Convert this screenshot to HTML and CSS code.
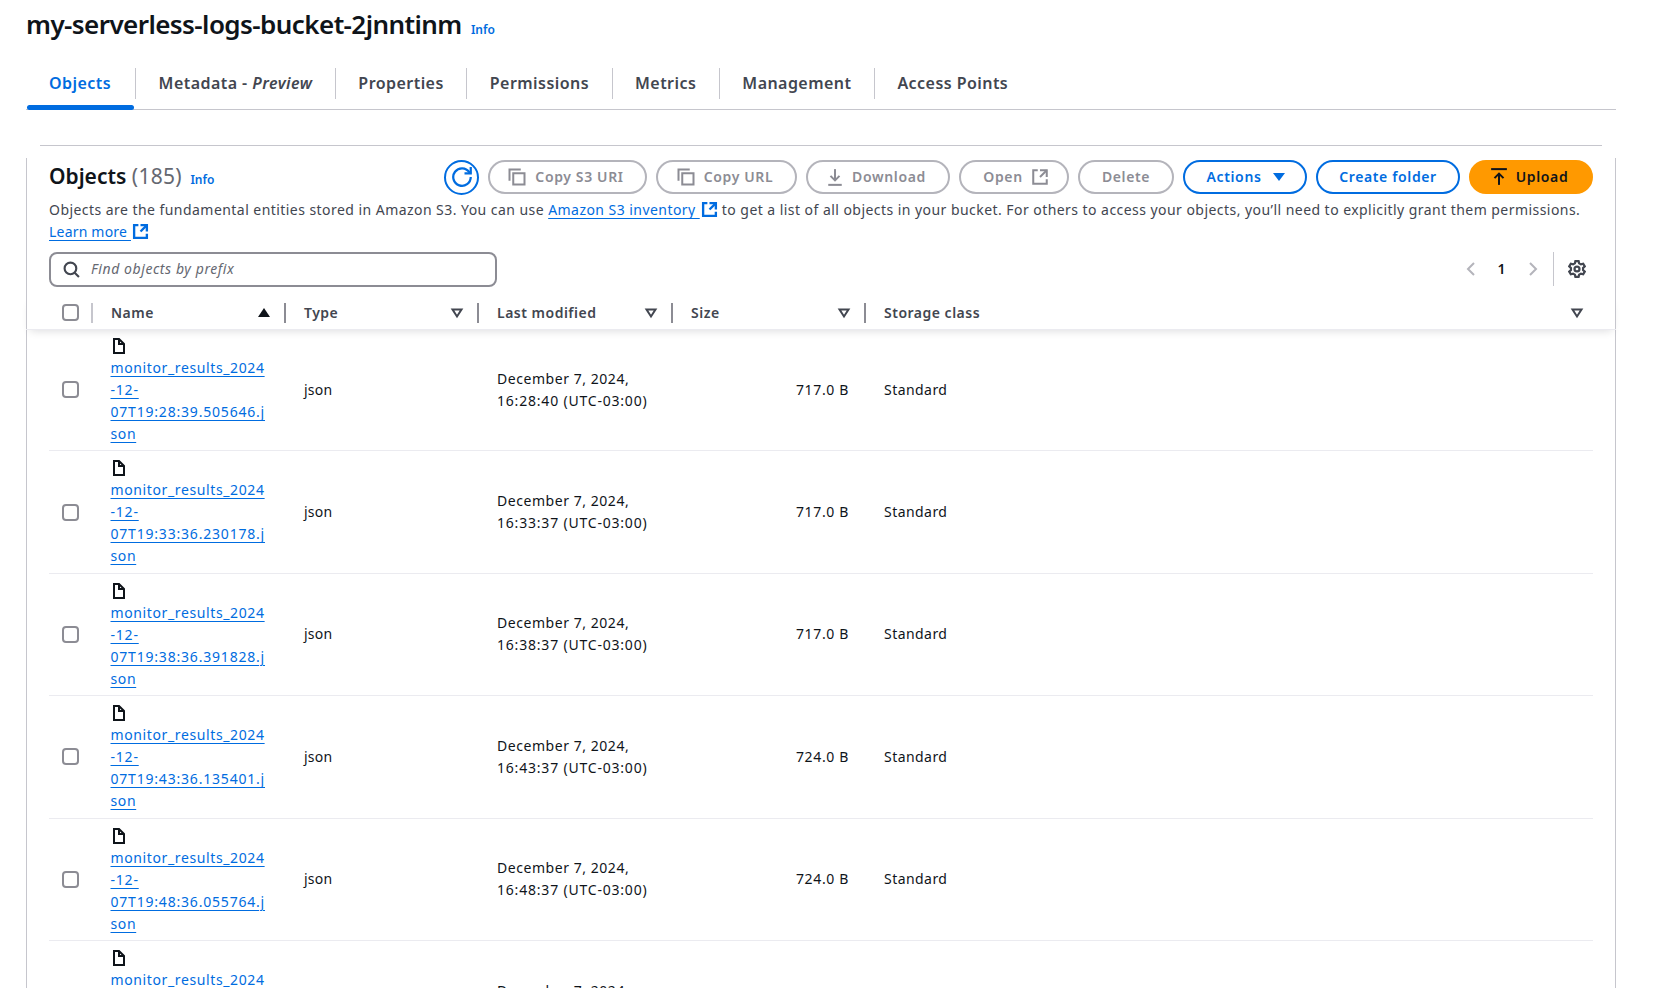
FILE: index.html
```html
<!DOCTYPE html>
<html lang="en">
<head>
<meta charset="utf-8">
<title>my-serverless-logs-bucket-2jnntinm</title>
<link rel="stylesheet" href="styles.css">
</head>
<body>
<svg class="sprite" aria-hidden="true">
  <symbol id="i-copy" viewBox="0 0 16 16"><path d="M5 5h9v9H5z"/><path d="M2 11V2h9"/></symbol>
  <symbol id="i-download" viewBox="0 0 16 16"><path d="M8 1v10"/><path d="M4 7l4 4 4-4"/><path d="M2 15h12"/></symbol>
  <symbol id="i-upload" viewBox="0 0 16 16"><path d="M8 15V5"/><path d="M12 9 8 5 4 9"/><path d="M1 1h14"/></symbol>
  <symbol id="i-ext" viewBox="0 0 16 16"><path d="M14 8V2H8"/><path d="M14 2 8 8"/><path d="M6 2H2v12h12v-4"/></symbol>
  <symbol id="i-refresh" viewBox="0 0 16 16"><path d="M10 5h5V0"/><path d="M15 8a7 7 0 1 1-1.2-3.9L15 5"/></symbol>
  <symbol id="i-search" viewBox="0 0 16 16"><circle cx="7" cy="7" r="5.5"/><path d="M11 11l4 4"/></symbol>
  <symbol id="i-file" viewBox="0 0 16 16"><path d="M8 1v5h5"/><path d="M13 15H3V1h5l5 5z"/></symbol>
  <symbol id="i-gear" viewBox="0 0 16 16"><path d="M6.6 1h2.8l.5 2 1.6.9 2-.6 1.4 2.4-1.5 1.4v1.8l1.5 1.4-1.4 2.4-2-.6-1.6.9-.5 2H6.6l-.5-2-1.6-.9-2 .6L1.1 10.300l1.500-1.400V7.100L1.100 5.700l1.400-2.400 2 .6 1.600-.9z"/><circle cx="8" cy="8" r="2.200"/></symbol>
  <symbol id="i-left" viewBox="0 0 16 16"><path d="M11 2 5 8l6 6"/></symbol>
  <symbol id="i-right" viewBox="0 0 16 16"><path d="M5 2l6 6-6 6"/></symbol>
  <symbol id="i-caret" viewBox="0 0 16 16"><path d="M3.500 4.500h9L8 11.500z"/></symbol>
</svg>

<main class="page">
  <h1 class="title">my-serverless-logs-bucket-2jnntinm <a class="info info-title" href="#">Info</a></h1>

  <nav class="tabs">
    <a class="tab tab-active" href="#">Objects</a>
    <a class="tab" href="#">Metadata - <em>Preview</em></a>
    <a class="tab" href="#">Properties</a>
    <a class="tab" href="#">Permissions</a>
    <a class="tab" href="#">Metrics</a>
    <a class="tab" href="#">Management</a>
    <a class="tab tab-last" href="#">Access Points</a>
  </nav>

  <section class="panel">
    <div class="panel-rule"></div>
    <div class="panel-head">
      <h2 class="heading">Objects <span class="count">(185)</span> <a class="info" href="#">Info</a></h2>
      <div class="actions">
        <button class="round" aria-label="Refresh"><svg class="ic"><use href="#i-refresh"/></svg></button>
        <button class="btn off lead w-s3"><svg class="ic ic-copy"><use href="#i-copy"/></svg>Copy S3 URI</button>
        <button class="btn off lead w-url"><svg class="ic ic-copy"><use href="#i-copy"/></svg>Copy URL</button>
        <button class="btn off lead w-dl"><svg class="ic"><use href="#i-download"/></svg>Download</button>
        <button class="btn off trail w-open">Open<svg class="ic"><use href="#i-ext"/></svg></button>
        <button class="btn off w-del">Delete</button>
        <button class="btn normal trail w-act">Actions<svg class="tri" viewBox="0 0 16 16"><path d="M2 4h12L8 12z"/></svg></button>
        <button class="btn normal w-folder">Create folder</button>
        <button class="btn primary lead w-up"><svg class="ic"><use href="#i-upload"/></svg>Upload</button>
      </div>
    </div>

    <p class="desc">Objects are the fundamental entities stored in Amazon S3. You can use <a class="link" href="#">Amazon S3 inventory <svg class="ic ext"><use href="#i-ext"/></svg></a> to get a list of all objects in your bucket. For others to access your objects, you’ll need to explicitly grant them permissions. <a class="link learn" href="#">Learn more <svg class="ic ext"><use href="#i-ext"/></svg></a></p>

    <div class="tools">
      <label class="search"><svg class="ic"><use href="#i-search"/></svg><span>Find objects by prefix</span></label>
      <div class="pager">
        <svg class="ic dim"><use href="#i-left"/></svg>
        <span class="page-no">1</span>
        <svg class="ic dim"><use href="#i-right"/></svg>
        <span class="pager-sep"></span>
        <svg class="ic gear"><use href="#i-gear"/></svg>
      </div>
    </div>

    <div class="thead">
      <div class="th th-check"><span class="box"></span></div>
      <div class="th">Name<svg class="sort solid" viewBox="0 0 16 16"><path d="M8 3l6 9H2z"/></svg></div>
      <div class="th">Type<svg class="sort"><use href="#i-caret"/></svg></div>
      <div class="th">Last modified<svg class="sort"><use href="#i-caret"/></svg></div>
      <div class="th">Size<svg class="sort"><use href="#i-caret"/></svg></div>
      <div class="th th-last">Storage class<svg class="sort"><use href="#i-caret"/></svg></div>
    </div>

    <div class="tbody">
      <div class="row">
        <div class="cell"><span class="box"></span></div>
        <div class="cell cell-name"><svg class="ic file"><use href="#i-file"/></svg><a class="link" href="#">monitor_results_2024<br><span class="nums">-12-</span><br><span class="nums">07T19:28:39.505646.j</span><br>son</a></div>
        <div class="cell">json</div>
        <div class="cell cell-date">December 7, 2024,<br><span class="nums">16:28:40 (UTC-03:00)</span></div>
        <div class="cell cell-size">717.0 B</div>
        <div class="cell cell-class">Standard</div>
      </div>
      <div class="row">
        <div class="cell"><span class="box"></span></div>
        <div class="cell cell-name"><svg class="ic file"><use href="#i-file"/></svg><a class="link" href="#">monitor_results_2024<br><span class="nums">-12-</span><br><span class="nums">07T19:33:36.230178.j</span><br>son</a></div>
        <div class="cell">json</div>
        <div class="cell cell-date">December 7, 2024,<br><span class="nums">16:33:37 (UTC-03:00)</span></div>
        <div class="cell cell-size">717.0 B</div>
        <div class="cell cell-class">Standard</div>
      </div>
      <div class="row">
        <div class="cell"><span class="box"></span></div>
        <div class="cell cell-name"><svg class="ic file"><use href="#i-file"/></svg><a class="link" href="#">monitor_results_2024<br><span class="nums">-12-</span><br><span class="nums">07T19:38:36.391828.j</span><br>son</a></div>
        <div class="cell">json</div>
        <div class="cell cell-date">December 7, 2024,<br><span class="nums">16:38:37 (UTC-03:00)</span></div>
        <div class="cell cell-size">717.0 B</div>
        <div class="cell cell-class">Standard</div>
      </div>
      <div class="row">
        <div class="cell"><span class="box"></span></div>
        <div class="cell cell-name"><svg class="ic file"><use href="#i-file"/></svg><a class="link" href="#">monitor_results_2024<br><span class="nums">-12-</span><br><span class="nums">07T19:43:36.135401.j</span><br>son</a></div>
        <div class="cell">json</div>
        <div class="cell cell-date">December 7, 2024,<br><span class="nums">16:43:37 (UTC-03:00)</span></div>
        <div class="cell cell-size">724.0 B</div>
        <div class="cell cell-class">Standard</div>
      </div>
      <div class="row">
        <div class="cell"><span class="box"></span></div>
        <div class="cell cell-name"><svg class="ic file"><use href="#i-file"/></svg><a class="link" href="#">monitor_results_2024<br><span class="nums">-12-</span><br><span class="nums">07T19:48:36.055764.j</span><br>son</a></div>
        <div class="cell">json</div>
        <div class="cell cell-date">December 7, 2024,<br><span class="nums">16:48:37 (UTC-03:00)</span></div>
        <div class="cell cell-size">724.0 B</div>
        <div class="cell cell-class">Standard</div>
      </div>
      <div class="row">
        <div class="cell"><span class="box"></span></div>
        <div class="cell cell-name"><svg class="ic file"><use href="#i-file"/></svg><a class="link" href="#">monitor_results_2024<br><span class="nums">-12-</span><br><span class="nums">07T19:53:36.102941.j</span><br>son</a></div>
        <div class="cell">json</div>
        <div class="cell cell-date">December 7, 2024,<br><span class="nums">16:53:37 (UTC-03:00)</span></div>
        <div class="cell cell-size">724.0 B</div>
        <div class="cell cell-class">Standard</div>
      </div>
    </div>
  </section>
</main>
</body>
</html>
```
FILE: styles.css
```css
* { box-sizing: border-box; }
html, body { margin: 0; height: 988px; overflow: hidden; background: #fff; }
body { font-family: "Noto Sans", sans-serif; font-size: 14px; line-height: 22px; color: #0f141a; }
.sprite { display: none; }
a { color: #006ce0; text-decoration: none; }
p, h1, h2 { margin: 0; }

.ic { width: 16px; height: 16px; fill: none; stroke: currentColor; stroke-width: 2; flex: none; }

.page { padding: 0 40px 0 26px; }
.title { height: 50px; font-size: 26px; line-height: 48px; font-weight: 600; letter-spacing: -0.57px; color: #0f141a; }
.info { font-size: 12px; font-weight: 600; letter-spacing: 0; color: #006ce0; margin-left: 4px; }
.info-title { position: relative; top: 0; left: -1px; }

.tabs { display: flex; height: 60px; padding-top: 18px; border-bottom: 1px solid #c6c6cd; }
.tab { position: relative; height: 31px; padding: 0 22.500px; line-height: 31px; font-size: 16px; font-weight: 600; letter-spacing: .45px; color: #424650; border-right: 1px solid #c6c6cd; white-space: nowrap; }
.tab em { font-style: italic; }
.tab-last { border-right: 0; }
.tab-active { color: #006ce0; padding: 0 24px 0 23px; }
.tab-active::after { content: ""; position: absolute; left: 1px; right: 1px; top: 37px; height: 5px; background: #006ce0; border-radius: 3px; }

.panel { position: relative; margin-top: 35px; }
.panel-rule { height: 1px; margin: 0 14px; background: #c6c6cd; }
.panel::before { content: ""; position: absolute; left: 0; top: 13px; bottom: 0; border-left: 1px solid #c6c6cd; }
.panel::after { content: ""; position: absolute; right: 0; top: 13px; bottom: 0; border-left: 1px solid #c6c6cd; }

.panel-head { display: flex; align-items: center; justify-content: space-between; height: 34px; margin: 14px 23px 0; }
.heading { font-size: 21px; line-height: 28px; padding-top: 2px; font-weight: 600; letter-spacing: 0; }
.count { font-weight: 400; color: #656871; letter-spacing: .3px; }
.heading .info { margin-left: 3px; }

.actions { display: flex; align-items: center; gap: 9px; }
.round { width: 35px; height: 35px; padding: 0; display: flex; align-items: center; justify-content: center; border: 2px solid #006ce0; border-radius: 50%; background: #fff; color: #006ce0; }
.round .ic { width: 20px; height: 20px; stroke-width: 1.800; }
.btn { display: flex; align-items: center; justify-content: center; gap: 8px; height: 34px; padding: 0; font: 600 14px/20px "Noto Sans", sans-serif; letter-spacing: .63px; border: 2px solid; border-radius: 20px; background: #fff; white-space: nowrap; }
.btn .ic { width: 18px; height: 18px; stroke-width: 1.800; }
.btn .ic-copy { width: 20px; height: 20px; stroke-width: 1.600; }
.lead { padding-right: 4px; }
.trail { padding-left: 4px; }
.off { color: #8c8c94; border-color: #b4b4bb; }
.normal { color: #006ce0; border-color: #006ce0; }
.primary { color: #0f141a; background: #ff9900; border-color: #ff9900; }
.tri { width: 16px; height: 16px; fill: #006ce0; margin-left: 2px; }
.w-s3 { width: 159px; } .w-url { width: 141px; } .w-dl { width: 144px; } .w-open { width: 110px; }
.w-del { width: 96px; } .w-act { width: 124px; } .w-folder { width: 144px; } .w-up { width: 124px; }

.desc { margin: 5px 23px 0; color: #424650; letter-spacing: .45px; }
.link { color: #006ce0; text-decoration: underline; text-underline-offset: 3px; text-decoration-thickness: 1px; }
.learn { letter-spacing: .2px; }
.ext { width: 17px; height: 17px; vertical-align: -3px; color: #006ce0; margin-left: 1px; stroke-width: 2.200; }

.tools { display: flex; justify-content: space-between; align-items: center; height: 36px; margin: 8px 23px 0; }
.search { display: flex; align-items: center; gap: 11px; width: 448px; height: 35px; padding: 0 12px; border: 2px solid #8c8c94; border-radius: 8px; color: #656871; font-style: italic; letter-spacing: .58px; }
.search .ic { width: 17px; height: 17px; color: #424650; }
.pager { display: flex; align-items: center; height: 36px; }
.dim { color: #b4b4bb; }
.page-no { width: 46px; text-align: center; font-weight: 600; }
.pager-sep { width: 1px; height: 34px; margin: 0 14.500px 0 12px; background: #c6c6cd; }
.gear { width: 18px; height: 18px; color: #424650; margin-right: 7px; }

.thead { position: relative; z-index: 1; display: grid; grid-template-columns: 67px 193px 193px 194px 193px 1fr; height: 34px; margin-top: 9px; align-items: center; box-shadow: 0 5px 8px -4px rgba(0,7,22,.14); border-bottom: 1px solid #ebebf0; }
.th { display: flex; align-items: center; justify-content: space-between; height: 20px; padding: 0 12px 0 18px; border-right: 2px solid #8c8c94; font-weight: 600; color: #424650; letter-spacing: .5px; }
.th-check { padding-left: 36px; border-right-color: #c6c6cd; }
.th-last { border-right: 0; padding-right: 31px; }
.sort { width: 16px; height: 16px; fill: none; stroke: #424650; stroke-width: 2; flex: none; }
.solid { fill: #0f141a; stroke: none; }
.box { display: block; flex: none; width: 17px; height: 17px; border: 2px solid #8c8c94; border-radius: 4px; background: #fff; }

.tbody { margin: -1px 23px 0; }
.row { display: grid; grid-template-columns: 44px 193px 193px 194px 193px 1fr; height: 122.400px; align-items: center; border-bottom: 1px solid #ebebf0; letter-spacing: .2px; }
.cell { padding-left: 18px; }
.row .cell:first-child { padding-left: 13px; }
.cell-name { align-self: start; padding: 9px 0 0 17.500px; letter-spacing: .62px; }
.cell-name .nums { letter-spacing: .8px; }
.cell-date { letter-spacing: .55px; }
.cell-date .nums { letter-spacing: .8px; }
.cell-class { letter-spacing: .45px; }
.file { display: block; margin: 0 0 3px; color: #0f141a; }
.cell-size { padding: 0 17px 0 0; text-align: right; letter-spacing: .65px; }
```
